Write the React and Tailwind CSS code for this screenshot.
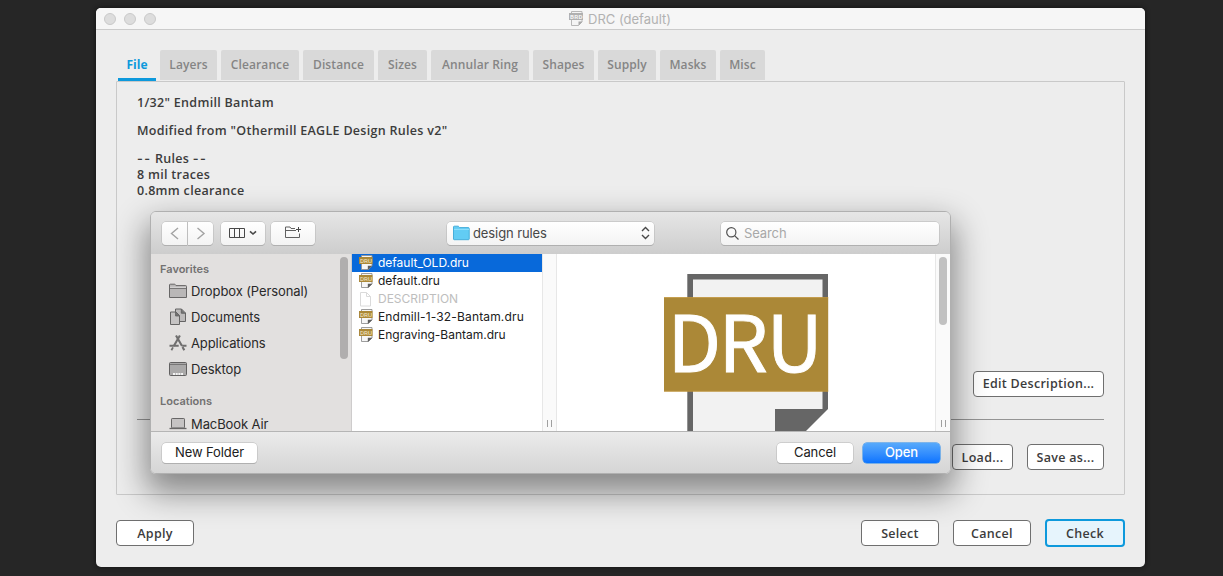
const tabs = [
  ["Layers", "w-[57px]", "mr-1"],
  ["Clearance", "w-[78px]", "mr-1"],
  ["Distance", "w-[71px]", "mr-1"],
  ["Sizes", "w-[49px]", "mr-1"],
  ["Annular Ring", "w-[98px]", "mr-1"],
  ["Shapes", "w-[61px]", "mr-1"],
  ["Supply", "w-[58px]", "mr-1"],
  ["Masks", "w-[56px]", "mr-1"],
  ["Misc", "w-[45px]", ""],
];

function FormButton({ children, className = "" }) {
  return (
    <button
      className={`flex h-[26px] shrink-0 items-center justify-center whitespace-nowrap rounded-[4px] border border-[#6f6f6f] bg-white pt-[2px] ${className}`}
    >
      {children}
    </button>
  );
}

function DruIcon() {
  return (
    <svg width="16" height="18" viewBox="0 0 16 18" className="shrink-0">
      <path d="M3.500 1.500h10.500v10.500l-3.500 3.500h-7z" fill="#f6f6f6" stroke="#929292" strokeWidth=".9" />
      <path d="M9.800 11.800h4.500l-4.500 4.300z" fill="#5d5d5d" />
      <rect x="1" y="3" width="13.500" height="7" fill="#ab8837" />
      <text x="1.900 6 10" y="8.800" fontSize="6.200" fontFamily="Roboto, sans-serif" fill="#f7ecd0">DRU</text>
    </svg>
  );
}

function BrdIcon() {
  return (
    <svg width="16" height="17" viewBox="0 0 16 17" className="shrink-0">
      <path d="M3.500 1.500h10.500v10.500l-3.500 3.500H3.500z" fill="#f4f4f4" stroke="#b8b8b8" />
      <path d="M10.500 11.500h4L10.500 15.800z" fill="#a8a8a8" />
      <rect x="1" y="3" width="14" height="7" fill="#b0b0b0" />
      <text x="2 6.300 10.500" y="8.800" fontSize="6.200" fontWeight="700" fontFamily="Roboto, sans-serif" fill="#f4f4f4">BRD</text>
    </svg>
  );
}

function FolderIcon() {
  return (
    <svg width="18" height="16" viewBox="0 0 18 16">
      <path d="M.5 14.5V2q0-.8.8-.8h4.2q.6 0 1 .6l.5.8h9.7q.8 0 .8.8v11.1z" fill="#b9b7b7" stroke="#676666" />
      <path d="M1 5.3h16" stroke="#676666" />
      <path d="M1 4.3h16" stroke="#dddcdc" />
    </svg>
  );
}

function DocsIcon() {
  return (
    <svg width="18" height="18" viewBox="0 0 18 18">
      <path d="M6.5 1h6l4 4v8.5h-10z" fill="#bdbbbb" stroke="#656464" />
      <path d="M12.3 1v4.2h4.2" fill="#777" stroke="#656464" />
      <path d="M1.5 4h5.5l3.5 3.5V16.5h-9z" fill="#c5c3c3" stroke="#656464" />
      <path d="M6.5 4v4h4z" fill="#6f6e6e" stroke="#656464" strokeWidth=".8" />
    </svg>
  );
}

function AppsIcon() {
  return (
    <svg width="18" height="18" viewBox="0 0 18 18" fill="none" stroke="#706f6f">
      <path d="M7 1.5l6 10.5M13.5 13l1.8 3.3" strokeWidth="2.1" />
      <path d="M10.9 1.5L4.8 12" strokeWidth="2.1" />
      <path d="M4 13.4l-1.6 2.8" strokeWidth="1.8" />
      <path d="M.5 11.7h9.2M13.2 11.7h4.3" strokeWidth="2" />
    </svg>
  );
}

function DesktopIcon() {
  return (
    <svg width="18" height="16" viewBox="0 0 18 16">
      <rect x=".5" y="1.5" width="17" height="13" rx="1" fill="#aaa9a9" stroke="#626161" />
      <path d="M1 3.5h16" stroke="#777676" />
      <path d="M4 13h10" stroke="#f4f4f4" strokeWidth="2" strokeDasharray="2 .7" />
    </svg>
  );
}

function LaptopIcon() {
  return (
    <svg width="18" height="14" viewBox="0 0 18 14">
      <rect x="2.5" y="1.5" width="13" height="9.5" rx=".7" fill="#c5c3c3" stroke="#676666" />
      <path d="M.5 11.5h17" stroke="#676666" strokeWidth="1.3" />
    </svg>
  );
}

function SideRow({ icon, label }) {
  return (
    <div className="flex h-[26px] items-center pl-[18px]">
      <span className="flex w-[22px] shrink-0">{icon}</span>
      <span className="whitespace-nowrap pt-px text-[13px] tracking-[-0.1px] text-[#292929]">{label}</span>
    </div>
  );
}

function FileRow({ label, tracking = "", selected, disabled }) {
  return (
    <div className={`flex h-[18px] items-center pl-[6px] ${selected ? "bg-[#0869da] text-white" : disabled ? "text-[#bebebe]" : "text-[#202020]"}`}>
      {disabled ? (
        <svg width="16" height="18" viewBox="0 0 16 18" className="shrink-0">
          <path d="M2.500 2.500h6l4 4v9.500h-10zM8.500 2.500v4h4" fill="#fff" stroke="#dadada" />
        </svg>
      ) : (
        <DruIcon />
      )}
      <span className={`ml-1 whitespace-nowrap text-[12px] ${tracking}`}>{label}</span>
    </div>
  );
}

const toolButton =
  "flex h-[23px] items-center justify-center bg-linear-to-b from-[#ffffff] to-[#f3f3f3] shadow-[0_0_0_0.5px_#b5b5b5,0_1px_0.5px_#aaaaaa]";

function OpenDialog() {
  return (
    <section className="absolute left-[54px] top-[203px] flex h-[263px] w-[801px] flex-col overflow-hidden rounded-[6px] border border-[#b0b0b0] bg-[#e4e4e4] font-['Inter',sans-serif] font-normal">
      <header className="flex h-[42px] shrink-0 items-center bg-linear-to-b from-[#e6e6e6] to-[#cdcdcd] pl-[11px]">
        <button className={`${toolButton} w-[25px] rounded-l-[4px]`}>
          <svg width="10" height="13" viewBox="0 0 10 13" fill="none" stroke="#a3a3a3" strokeWidth="1.4"><path d="M8 1L1.500 6.500 8 12" /></svg>
        </button>
        <button className={`${toolButton} ml-px w-[25px] rounded-r-[4px]`}>
          <svg width="10" height="13" viewBox="0 0 10 13" fill="none" stroke="#a3a3a3" strokeWidth="1.4"><path d="M1.500 1l6.500 5.500L1.500 12" /></svg>
        </button>
        <button className={`${toolButton} ml-2 w-[44px] rounded-[4px]`}>
          <svg width="28" height="12" viewBox="0 0 28 12" fill="none" stroke="#484848">
            <path d="M.5 1.500h15v9H.5zM5.500 1.500v9M10.500 1.500v9" />
            <path d="M21 4.300l3 2.700 3-2.700" strokeWidth="1.600" />
          </svg>
        </button>
        <button className={`${toolButton} ml-[6px] w-[44px] rounded-[4px]`}>
          <svg width="18" height="14" viewBox="0 0 18 14" fill="none" stroke="#606060" className="-mt-[2px]">
            <path d="M11 3.500H7L6 2H1.500V12.500h14V8.500M1.500 5.500h10.500" />
            <path d="M14.500 2v5M12 4.500h5" stroke="#484848" />
          </svg>
        </button>
        <div className={`${toolButton} ml-[132px] w-[207px] justify-start rounded-[4px] pl-[6px] text-[13px] text-[#474747]`}>
          <svg width="17" height="16" viewBox="0 0 17 16">
            <path d="M.5 14V2q0-.8.8-.8H5q.5 0 1 .6l.6.8h8.8q.8 0 .8.8V14q0 .7-.8.7H1.200Q.5 14.700 .5 14z" fill="#62ccf4" stroke="#47aeda" />
            <path d="M1 4.400h15" stroke="#91e0fb" />
          </svg>
          <span className="ml-[3px] flex-1 pt-px tracking-[-0.1px]">design rules</span>
          <svg width="9" height="14" viewBox="0 0 9 14" fill="none" stroke="#484848" strokeWidth="1.4" className="mr-1"><path d="M1 5l3.500-3.500L8 5M1 9l3.500 3.500L8 9" /></svg>
        </div>
        <div className={`${toolButton} ml-[67px] w-[218px] justify-start rounded-[4px] pl-[5px] text-[13px] text-[#a8a8a8]`}>
          <svg width="13" height="13" viewBox="0 0 13 13" fill="none" stroke="#505050" strokeWidth="1.2"><circle cx="5.300" cy="5.300" r="4.600" /><path d="M8.600 8.600L12.500 12.500" /></svg>
          <span className="ml-[5px] pt-px tracking-[-0.1px]">Search</span>
        </div>
      </header>
      <main className="flex h-[177px] shrink-0 overflow-hidden bg-white">
        <aside className="flex w-[201px] shrink-0 border-r border-[#cecccc] bg-[#e2e0df]">
          <div className="w-[188px] shrink-0">
            <h2 className="flex h-[24px] items-center pl-[9px] pt-[6px] text-[11px] font-semibold text-[#727171]">Favorites</h2>
            <SideRow icon={<FolderIcon />} label="Dropbox (Personal)" />
            <SideRow icon={<DocsIcon />} label="Documents" />
            <SideRow icon={<AppsIcon />} label="Applications" />
            <SideRow icon={<DesktopIcon />} label="Desktop" />
            <h2 className="mt-[10px] flex h-[19px] items-center pl-[9px] text-[11px] font-semibold text-[#727171]">Locations</h2>
            <SideRow icon={<LaptopIcon />} label="MacBook Air" />
          </div>
          <div className="ml-[1px] mt-[3px] h-[102px] w-[8px] rounded-full bg-[#b0aeae]" />
        </aside>
        <div className="w-[190px] shrink-0">
          <FileRow selected label="default_OLD.dru" />
          <FileRow label="default.dru" />
          <FileRow disabled label="DESCRIPTION" />
          <FileRow label="Endmill-1-32-Bantam.dru" tracking="tracking-[0.16px]" />
          <FileRow label="Engraving-Bantam.dru" />
        </div>
        <div className="flex w-[15px] shrink-0 items-end justify-center gap-[3px] border-x border-[#e7e7e7] bg-[#fafafa] pb-[4px]">
          <i className="h-[7px] w-px bg-[#a0a0a0]" />
          <i className="h-[7px] w-px bg-[#a0a0a0]" />
        </div>
        <div className="w-[378px] shrink-0">
          <svg width="378" height="177" viewBox="557 254 378 177">
            <path d="M687.300 274H828V409l-28 28H687.300z" fill="#666" />
            <path d="M693 279.500H822.500V409H775v28H693z" fill="#f2f2f2" />
            <rect x="664" y="297.300" width="164.200" height="94.200" fill="#ab8837" />
            <path d="M664 297.600h164.200M664 391.200h164.200" stroke="#c6983e" strokeWidth=".7" />
            <text x="667.500 718.500 766.500" y="372.400" fontSize="78" fontFamily="Noto Sans CJK SC, sans-serif" fill="#fff" stroke="#fff" strokeWidth=".9">DRU</text>
          </svg>
        </div>
        <div className="flex w-[15px] shrink-0 flex-col items-center border-l border-[#e7e7e7] bg-[#fafafa] pt-[3px]">
          <div className="h-[68px] w-[8px] rounded-full bg-[#c1c1c1]" />
          <div className="mt-[95px] flex gap-[3px]">
            <i className="h-[7px] w-px bg-[#a0a0a0]" />
            <i className="h-[7px] w-px bg-[#a0a0a0]" />
          </div>
        </div>
      </main>
      <footer className="flex flex-1 items-center border-t border-[#b5b5b5] bg-linear-to-b from-[#ebebeb] to-[#d5d5d5] pl-[11px] text-[13px] tracking-[-0.1px] text-[#202020]">
        <button className="h-[20px] w-[95px] rounded-[4px] bg-white pb-[2px] leading-[18px] shadow-[0_0_0_0.5px_#b5b5b5,0_1px_0.5px_#aaa]">New Folder</button>
        <button className="ml-[520px] h-[20px] w-[76px] rounded-[4px] bg-white pb-[2px] leading-[18px] shadow-[0_0_0_0.5px_#b5b5b5,0_1px_0.5px_#aaa]">Cancel</button>
        <button className="ml-[10px] h-[20px] w-[77px] rounded-[4px] bg-linear-to-b from-[#57a9fb] to-[#0873ff] pb-[2px] font-medium leading-[18px] text-white shadow-[0_0_0_0.5px_#1683ef]">Open</button>
      </footer>
    </section>
  );
}

export default function App() {
  return (
    <div className="h-[576px] w-[1223px] overflow-hidden bg-[#262626] pl-[96px] pt-[8px] font-['Open_Sans','Liberation_Sans',sans-serif] text-[12.5px] font-semibold text-[#3c3c3c]">
      <div className="relative flex h-[559px] w-[1049px] flex-col overflow-hidden rounded-[5px] bg-[#ededed] shadow-[0_0_5px_#111]">
        <header className="flex h-[22px] shrink-0 items-center border-b border-[#cbcbcb] bg-[#f6f6f6] pl-[8px]">
          <i className="mr-2 h-3 w-3 rounded-full border border-[#c9c9c9] bg-[#dddddd]" />
          <i className="mr-2 h-3 w-3 rounded-full border border-[#c9c9c9] bg-[#dddddd]" />
          <i className="h-3 w-3 rounded-full border border-[#c9c9c9] bg-[#dddddd]" />
          <h1 className="ml-[412px] flex items-center gap-[4px] font-['Inter',sans-serif] text-[13px] font-normal text-[#b2b2b2]">
            <BrdIcon />
            <span className="pt-[2px]">DRC (default)</span>
          </h1>
        </header>
        <nav className="flex h-[51px] shrink-0 items-end pl-[22px]">
          <div className="mr-1 flex h-[31px] w-[38px] items-center justify-center border-b-[3px] border-[#0d99dc] pt-[2px] font-bold text-[12px] text-[#0d99dc]">File</div>
          {tabs.map(([label, width, margin]) => (
            <div key={label} className={`mb-[1px] flex h-[30px] items-center justify-center whitespace-nowrap rounded-t-[2px] bg-[#d9d9d9] pb-px text-[12px] tracking-[0.1px] text-[#858585] ${width} ${margin}`}>
              {label}
            </div>
          ))}
        </nav>
        <main className="mx-5 flex h-[414px] w-[1009px] shrink-0 flex-col rounded-[1px] border border-[#c9c9c9] px-5 pt-[13px]">
          <div className="h-[276px] leading-4 tracking-[0.3px]">
            <p>1/32" Endmill Bantam</p>
            <p className="mt-3">Modified from "Othermill EAGLE Design Rules v2"</p>
            <p className="mt-3">
              <span className="font-['Inter',sans-serif] tracking-[1.4px]">--</span> Rules{" "}
              <span className="font-['Inter',sans-serif] tracking-[1.4px]">--</span>
            </p>
            <p>8 mil traces</p>
            <p>0.8mm clearance</p>
          </div>
          <div className="flex justify-end tracking-[0.3px]">
            <FormButton className="w-[131px] pb-px">Edit Description...</FormButton>
          </div>
          <div className="mt-[22px] h-px shrink-0 bg-[#949494]" />
          <div className="mt-[24px] flex justify-end gap-[14px] tracking-[0.3px]">
            <FormButton className="w-[61px]">Load...</FormButton>
            <FormButton className="w-[77px]">Save as...</FormButton>
          </div>
        </main>
        <footer className="mt-[24px] flex h-[28px] items-center px-5 tracking-[0.3px]">
          <FormButton className="w-[78px]">Apply</FormButton>
          <div className="flex flex-1 items-center justify-end gap-[14px]">
            <FormButton className="w-[78px]">Select</FormButton>
            <FormButton className="w-[78px]">Cancel</FormButton>
            <button className="flex h-[28px] w-[80px] items-center justify-center rounded-[4px] border-2 border-[#0d99dc] bg-[#e6f4fc] pt-[2px]">Check</button>
          </div>
        </footer>
        <div className="pointer-events-none absolute left-[54px] top-[203px] h-[263px] w-[801px] rounded-[6px] shadow-[0_15px_32px_4px_rgba(0,0,0,0.43)]" />
        <OpenDialog />
      </div>
    </div>
  );
}
